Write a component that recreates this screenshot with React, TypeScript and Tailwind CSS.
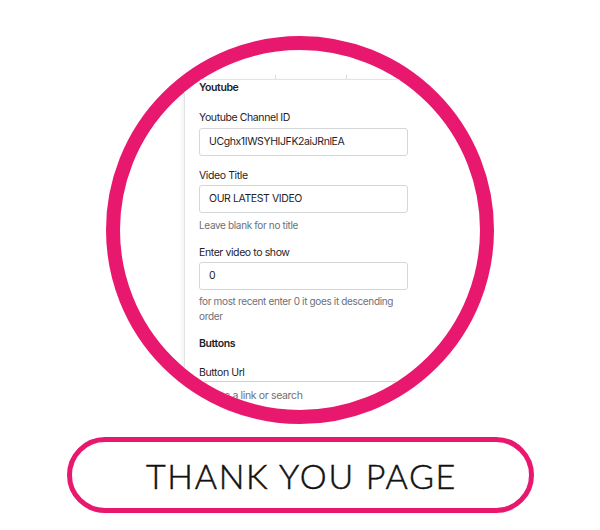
import React from "react";

function Field({ value }: { value: string }) {
  return (
    <div className="w-[209px] h-[28px] border border-[#d4d6da] rounded-[3px] flex items-center pl-[9px] text-[10.5px] tracking-[-0.4px] text-[#1f2328]">
      {value}
    </div>
  );
}

export default function App() {
  return (
    <div
      className="w-[600px] h-[530px] bg-white flex flex-col items-center"
      style={{ fontFamily: "Inter, 'Liberation Sans', sans-serif" }}
    >
      <div className="mt-[36px] w-[388px] h-[388px] rounded-full border-[14px] border-[#e9186f] overflow-hidden bg-white shrink-0">
        <div className="ml-[64px] w-[320px]">
          {/* tab strip */}
          <div className="h-[29px] flex items-end">
            <div className="w-[91px]" />
            <div className="w-[71px] h-[4px] border-l border-[#dcdde0]" />
            <div className="w-[80px] h-[4px] border-l border-[#dcdde0]" />
          </div>
          {/* panel */}
          <div className="border-t border-l border-[#e2e3e6] shadow-[-3px_0_3px_rgba(0,0,0,0.04)] pl-[14px] pb-[40px]">
            <div className="h-[16px] leading-[16px] text-[10.5px] tracking-[-0.4px] font-semibold text-[#1f2328]">Youtube</div>
            <div className="mt-[14px] h-[16px] leading-[16px] text-[10.5px] tracking-[-0.4px] text-[#1f2328]">Youtube Channel ID</div>
            <div className="mt-[2px]">
              <Field value="UCghx1IWSYHIJFK2aiJRnlEA" />
            </div>
            <div className="mt-[12px] h-[16px] leading-[16px] text-[10.5px] tracking-[-0.4px] text-[#1f2328]">Video Title</div>
            <div className="mt-[1px]">
              <Field value="OUR LATEST VIDEO" />
            </div>
            <div className="mt-[4px] h-[16px] leading-[16px] text-[10px] tracking-[-0.35px] text-[#6d7178]">Leave blank for no title</div>
            <div className="mt-[12px] h-[16px] leading-[16px] text-[10.5px] tracking-[-0.4px] text-[#1f2328]">Enter video to show</div>
            <div className="mt-[1px]">
              <Field value="0" />
            </div>
            <div className="mt-[4px] w-[212px] leading-[15px] text-[10px] tracking-[-0.35px] text-[#6d7178]">
              for most recent enter 0 it goes it descending order
            </div>
            <div className="mt-[12px] h-[16px] leading-[16px] text-[10.5px] tracking-[-0.4px] font-semibold text-[#1f2328]">Buttons</div>
            <div className="mt-[13px] h-[16px] leading-[16px] text-[10.5px] tracking-[-0.4px] text-[#1f2328]">Button Url</div>
            <div className="border-t-[1.5px] border-[#cfd1d5] w-[260px]" />
            <div className="mt-[6px] pl-[5px] h-[16px] leading-[16px] text-[10.5px] tracking-[-0.35px] text-[#6d7178]">Paste a link or search</div>
          </div>
        </div>
      </div>
      <div className="mt-[13px] w-[467px] h-[76px] rounded-full border-[5px] border-[#e9186f] flex items-center justify-center shrink-0">
        <span
          className="text-[34px] font-light text-[#111] tracking-[0.05em] ml-[3px] [-webkit-text-stroke:0.5px_#111]"
          style={{ fontFamily: "Lato, 'Open Sans', sans-serif" }}
        >
          THANK YOU PAGE
        </span>
      </div>
    </div>
  );
}
